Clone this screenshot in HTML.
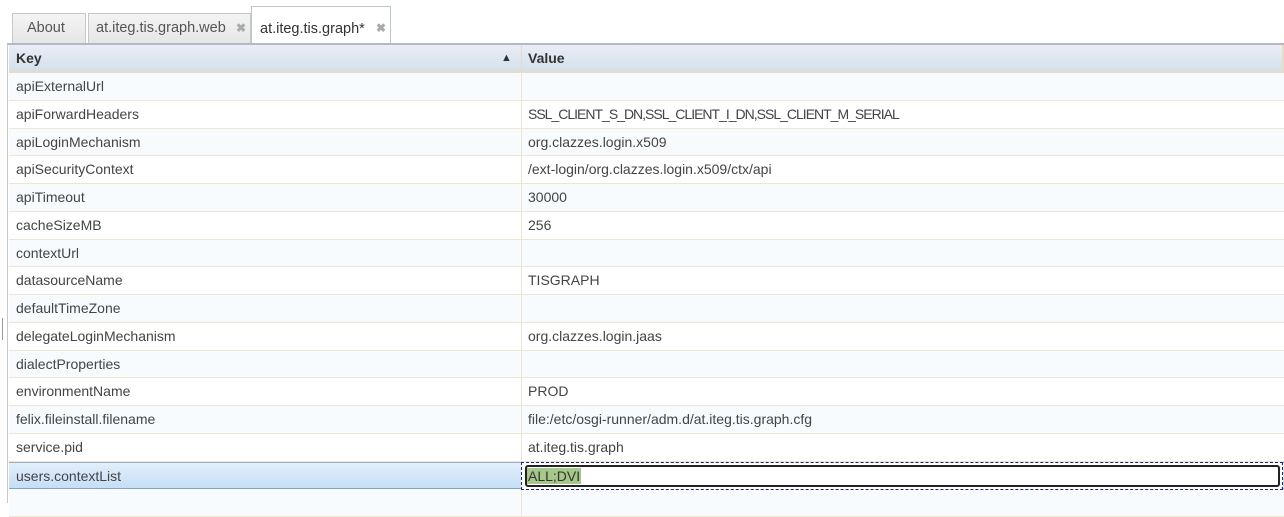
<!DOCTYPE html>
<html><head><style>
*{margin:0;padding:0;box-sizing:border-box}
body{width:1284px;height:500px;overflow:hidden;background:#fff;font-family:"Liberation Sans",sans-serif;font-size:14px;color:#444;position:relative}
.tab{position:absolute;top:13px;height:30px;border:1px solid #c8c8c8;border-bottom:none;background:linear-gradient(#f4f4f4,#e6e6e6);line-height:29px;padding-left:14px;color:#555;font-size:14.5px}
.tab .x{position:absolute;top:0;font-size:12px;color:#aaa;font-weight:bold;line-height:29px}
.tab.act{top:6px;height:38px;background:#fff;border-color:#bcc6d0;line-height:44px;color:#333;padding-left:8px}
.grid{position:absolute;left:7px;top:43px;width:1277px;height:460px;border-left:1px solid #c8c8c8;border-top:2px solid #b4b9c6}
.hdr{position:absolute;left:1px;top:0;width:1275px;height:28px;background:linear-gradient(#eaeef6,#d3e0ec);border-bottom:2px solid #eadcc4;border-right:2px solid #eadcc4;font-weight:bold;color:#333;line-height:27px}
.row{position:absolute;left:1px;width:1275px;height:27.75px;border-bottom:1px solid #efe5d3;line-height:27px}
.row:nth-child(odd){background:#f8fbfe}
.k{position:absolute;left:7px}
.v{position:absolute;left:519px}
.sep{position:absolute;left:512px;top:0;bottom:0;border-left:1px solid #efe5d3}
</style></head><body>
<div class="tab" style="left:12px;width:74px">About</div>
<div class="tab" style="left:88px;width:163px;padding-left:7px">at.iteg.tis.graph.web<span class="x" style="left:147px">✖</span></div>
<div class="tab act" style="left:251px;width:140px">at.iteg.tis.graph*<span class="x" style="left:124px;top:7px">✖</span></div>
<div style="position:absolute;left:2px;top:318px;width:1px;height:22px;background:#999"></div>
<div class="grid">
<div class="hdr"><span class="k">Key</span><span style="position:absolute;left:492px;font-size:11px;top:0">▲</span><span class="sep" style="border-color:#eadcc4"></span><span class="v">Value</span></div>
<div style="position:absolute;top:28px;left:0;width:1277px">
<div class="row" style="top:0"><span class="k">apiExternalUrl</span><span class="sep"></span></div>
<div class="row" style="top:27.75px"><span class="k">apiForwardHeaders</span><span class="sep"></span><span class="v" style="letter-spacing:-1px">SSL_CLIENT_S_DN,SSL_CLIENT_I_DN,SSL_CLIENT_M_SERIAL</span></div>
<div class="row" style="top:55.5px"><span class="k">apiLoginMechanism</span><span class="sep"></span><span class="v">org.clazzes.login.x509</span></div>
<div class="row" style="top:83.25px"><span class="k">apiSecurityContext</span><span class="sep"></span><span class="v">/ext-login/org.clazzes.login.x509/ctx/api</span></div>
<div class="row" style="top:111px"><span class="k">apiTimeout</span><span class="sep"></span><span class="v">30000</span></div>
<div class="row" style="top:138.75px"><span class="k">cacheSizeMB</span><span class="sep"></span><span class="v">256</span></div>
<div class="row" style="top:166.5px"><span class="k">contextUrl</span><span class="sep"></span></div>
<div class="row" style="top:194.25px"><span class="k">datasourceName</span><span class="sep"></span><span class="v">TISGRAPH</span></div>
<div class="row" style="top:222px"><span class="k">defaultTimeZone</span><span class="sep"></span></div>
<div class="row" style="top:249.75px"><span class="k">delegateLoginMechanism</span><span class="sep"></span><span class="v">org.clazzes.login.jaas</span></div>
<div class="row" style="top:277.5px"><span class="k">dialectProperties</span><span class="sep"></span></div>
<div class="row" style="top:305.25px"><span class="k">environmentName</span><span class="sep"></span><span class="v">PROD</span></div>
<div class="row" style="top:333px"><span class="k">felix.fileinstall.filename</span><span class="sep"></span><span class="v">file:/etc/osgi-runner/adm.d/at.iteg.tis.graph.cfg</span></div>
<div class="row" style="top:360.75px"><span class="k">service.pid</span><span class="sep"></span><span class="v">at.iteg.tis.graph</span></div>
<div class="row" style="top:388.5px;background:linear-gradient(#e3effb,#c6def6);border-top:1px solid #9fb0c4;border-bottom:1px solid #7fa3c8;line-height:26px"><span class="k">users.contextList</span></div>
<div style="position:absolute;top:388.5px;left:513px;width:762px;height:28px;border:1px dashed #1a237e;background:#fff"><div style="position:absolute;left:3px;top:2px;right:2px;bottom:2px;border:2px solid #222;border-radius:3px;line-height:19px"><span style="background:#a5c88a;color:#333;padding:0 1px">ALL;DVI</span></div></div>
<div class="row" style="top:416.5px"><span class="sep"></span></div>
</div>
</div>
</body></html>
